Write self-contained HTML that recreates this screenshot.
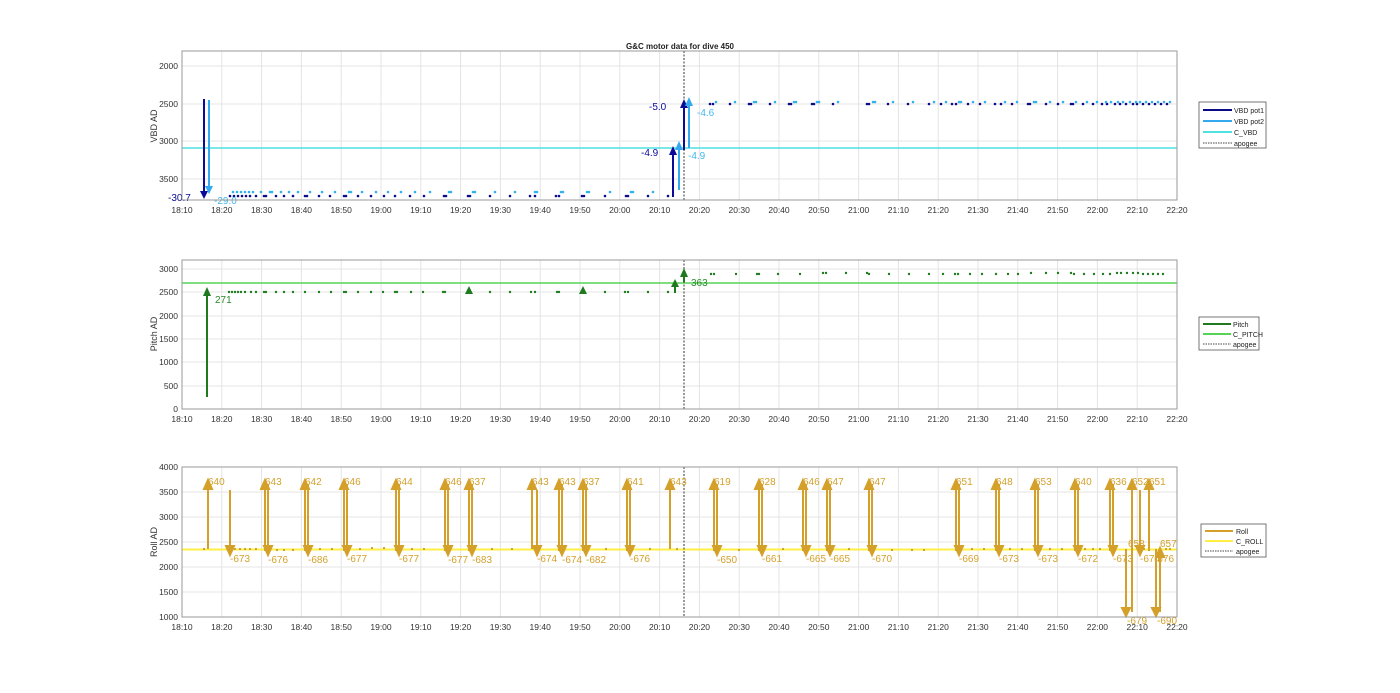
<!DOCTYPE html>
<html><head><meta charset="utf-8"><style>
html,body{margin:0;padding:0;background:#fff;width:1400px;height:693px;overflow:hidden}
svg{display:block;font-family:"Liberation Sans",Arial,sans-serif}
.tk{font-size:8.5px;fill:#333}
.g{stroke:#e4e4e4;stroke-width:1}
.ax{fill:none;stroke:#9a9a9a;stroke-width:1}
</style></head><body>
<svg width="1400" height="693" viewBox="0 0 1400 693">
<defs>
<marker id="mN" markerWidth="10" markerHeight="10" refX="5" refY="9" orient="auto" markerUnits="userSpaceOnUse"><path d="M0,9 L5,0 L10,9z" fill="#0b0b99" transform="rotate(0)"/></marker>
</defs>

<!-- ============ PLOT 1 ============ -->
<g>
<rect x="182" y="51" width="995" height="149" fill="#fff"/>
<g class="g">
<line x1="221.8" y1="51" x2="221.8" y2="200"/><line x1="261.6" y1="51" x2="261.6" y2="200"/><line x1="301.4" y1="51" x2="301.4" y2="200"/><line x1="341.2" y1="51" x2="341.2" y2="200"/><line x1="381" y1="51" x2="381" y2="200"/><line x1="420.8" y1="51" x2="420.8" y2="200"/><line x1="460.6" y1="51" x2="460.6" y2="200"/><line x1="500.4" y1="51" x2="500.4" y2="200"/><line x1="540.2" y1="51" x2="540.2" y2="200"/><line x1="580" y1="51" x2="580" y2="200"/><line x1="619.8" y1="51" x2="619.8" y2="200"/><line x1="659.6" y1="51" x2="659.6" y2="200"/><line x1="699.4" y1="51" x2="699.4" y2="200"/><line x1="739.2" y1="51" x2="739.2" y2="200"/><line x1="779" y1="51" x2="779" y2="200"/><line x1="818.8" y1="51" x2="818.8" y2="200"/><line x1="858.6" y1="51" x2="858.6" y2="200"/><line x1="898.4" y1="51" x2="898.4" y2="200"/><line x1="938.2" y1="51" x2="938.2" y2="200"/><line x1="978" y1="51" x2="978" y2="200"/><line x1="1017.8" y1="51" x2="1017.8" y2="200"/><line x1="1057.6" y1="51" x2="1057.6" y2="200"/><line x1="1097.4" y1="51" x2="1097.4" y2="200"/><line x1="1137.2" y1="51" x2="1137.2" y2="200"/>
<line x1="182" y1="66" x2="1177" y2="66"/><line x1="182" y1="104" x2="1177" y2="104"/><line x1="182" y1="141" x2="1177" y2="141"/><line x1="182" y1="179" x2="1177" y2="179"/>
</g>
<line x1="182" y1="148" x2="1177" y2="148" stroke="#4fe0e0" stroke-width="1.5"/>
<line x1="684" y1="51" x2="684" y2="200" stroke="#333" stroke-width="1" stroke-dasharray="2,1.5"/>
<g fill="#0b0b88">
<circle cx="230" cy="196" r="1.3"/><circle cx="234" cy="196" r="1.3"/><circle cx="238" cy="196" r="1.3"/><circle cx="242" cy="196" r="1.3"/><circle cx="246" cy="196" r="1.3"/><circle cx="250" cy="196" r="1.3"/><circle cx="256" cy="196" r="1.3"/><circle cx="264" cy="196" r="1.3"/><circle cx="266" cy="196" r="1.3"/><circle cx="276" cy="196" r="1.3"/><circle cx="284" cy="196" r="1.3"/><circle cx="293" cy="196" r="1.3"/><circle cx="305" cy="196" r="1.3"/><circle cx="307" cy="196" r="1.3"/><circle cx="319" cy="196" r="1.3"/><circle cx="330" cy="196" r="1.3"/><circle cx="344" cy="196" r="1.3"/><circle cx="346" cy="196" r="1.3"/><circle cx="358" cy="196" r="1.3"/><circle cx="371" cy="196" r="1.3"/><circle cx="384" cy="196" r="1.3"/><circle cx="395" cy="196" r="1.3"/><circle cx="410" cy="196" r="1.3"/><circle cx="424" cy="196" r="1.3"/><circle cx="444" cy="196" r="1.3"/><circle cx="446" cy="196" r="1.3"/><circle cx="468" cy="196" r="1.3"/><circle cx="470" cy="196" r="1.3"/><circle cx="490" cy="196" r="1.3"/><circle cx="510" cy="196" r="1.3"/><circle cx="530" cy="196" r="1.3"/><circle cx="535" cy="196" r="1.3"/><circle cx="556" cy="196" r="1.3"/><circle cx="559" cy="196" r="1.3"/><circle cx="582" cy="196" r="1.3"/><circle cx="584" cy="196" r="1.3"/><circle cx="605" cy="196" r="1.3"/><circle cx="626" cy="196" r="1.3"/><circle cx="628" cy="196" r="1.3"/><circle cx="648" cy="196" r="1.3"/><circle cx="668" cy="196" r="1.3"/>
<circle cx="710" cy="104" r="1.3"/><circle cx="713" cy="104" r="1.3"/><circle cx="730" cy="104" r="1.3"/><circle cx="749" cy="104" r="1.3"/><circle cx="751" cy="104" r="1.3"/><circle cx="770" cy="104" r="1.3"/><circle cx="789" cy="104" r="1.3"/><circle cx="791" cy="104" r="1.3"/><circle cx="812" cy="104" r="1.3"/><circle cx="814" cy="104" r="1.3"/><circle cx="833" cy="104" r="1.3"/><circle cx="867" cy="104" r="1.3"/><circle cx="869" cy="104" r="1.3"/><circle cx="888" cy="104" r="1.3"/><circle cx="908" cy="104" r="1.3"/><circle cx="929" cy="104" r="1.3"/><circle cx="941" cy="104" r="1.3"/><circle cx="952" cy="104" r="1.3"/><circle cx="956" cy="104" r="1.3"/><circle cx="968" cy="104" r="1.3"/><circle cx="980" cy="104" r="1.3"/><circle cx="995" cy="104" r="1.3"/><circle cx="1001" cy="104" r="1.3"/><circle cx="1012" cy="104" r="1.3"/><circle cx="1028" cy="104" r="1.3"/><circle cx="1030" cy="104" r="1.3"/><circle cx="1046" cy="104" r="1.3"/><circle cx="1058" cy="104" r="1.3"/><circle cx="1071" cy="104" r="1.3"/><circle cx="1073" cy="104" r="1.3"/><circle cx="1083" cy="104" r="1.3"/><circle cx="1093" cy="104" r="1.3"/><circle cx="1102" cy="104" r="1.3"/><circle cx="1107" cy="104" r="1.3"/><circle cx="1115" cy="104" r="1.3"/><circle cx="1120" cy="104" r="1.3"/><circle cx="1126" cy="104" r="1.3"/><circle cx="1133" cy="104" r="1.3"/><circle cx="1137" cy="104" r="1.3"/><circle cx="1143" cy="104" r="1.3"/><circle cx="1149" cy="104" r="1.3"/><circle cx="1155" cy="104" r="1.3"/><circle cx="1161" cy="104" r="1.3"/><circle cx="1167" cy="104" r="1.3"/>
</g>
<g fill="#33b0f0">
<circle cx="233" cy="192" r="1.3"/><circle cx="237" cy="192" r="1.3"/><circle cx="241" cy="192" r="1.3"/><circle cx="245" cy="192" r="1.3"/><circle cx="249" cy="192" r="1.3"/><circle cx="253" cy="192" r="1.3"/><circle cx="261" cy="192" r="1.3"/><circle cx="270" cy="192" r="1.3"/><circle cx="272" cy="192" r="1.3"/><circle cx="281" cy="192" r="1.3"/><circle cx="289" cy="192" r="1.3"/><circle cx="298" cy="192" r="1.3"/><circle cx="310" cy="192" r="1.3"/><circle cx="322" cy="192" r="1.3"/><circle cx="335" cy="192" r="1.3"/><circle cx="349" cy="192" r="1.3"/><circle cx="351" cy="192" r="1.3"/><circle cx="362" cy="192" r="1.3"/><circle cx="376" cy="192" r="1.3"/><circle cx="388" cy="192" r="1.3"/><circle cx="401" cy="192" r="1.3"/><circle cx="415" cy="192" r="1.3"/><circle cx="430" cy="192" r="1.3"/><circle cx="449" cy="192" r="1.3"/><circle cx="451" cy="192" r="1.3"/><circle cx="473" cy="192" r="1.3"/><circle cx="475" cy="192" r="1.3"/><circle cx="495" cy="192" r="1.3"/><circle cx="515" cy="192" r="1.3"/><circle cx="535" cy="192" r="1.3"/><circle cx="537" cy="192" r="1.3"/><circle cx="561" cy="192" r="1.3"/><circle cx="563" cy="192" r="1.3"/><circle cx="587" cy="192" r="1.3"/><circle cx="589" cy="192" r="1.3"/><circle cx="610" cy="192" r="1.3"/><circle cx="631" cy="192" r="1.3"/><circle cx="633" cy="192" r="1.3"/><circle cx="653" cy="192" r="1.3"/>
<circle cx="716" cy="102" r="1.3"/><circle cx="735" cy="102" r="1.3"/><circle cx="754" cy="102" r="1.3"/><circle cx="756" cy="102" r="1.3"/><circle cx="775" cy="102" r="1.3"/><circle cx="794" cy="102" r="1.3"/><circle cx="796" cy="102" r="1.3"/><circle cx="817" cy="102" r="1.3"/><circle cx="819" cy="102" r="1.3"/><circle cx="838" cy="102" r="1.3"/><circle cx="873" cy="102" r="1.3"/><circle cx="875" cy="102" r="1.3"/><circle cx="893" cy="102" r="1.3"/><circle cx="913" cy="102" r="1.3"/><circle cx="934" cy="102" r="1.3"/><circle cx="946" cy="102" r="1.3"/><circle cx="959" cy="102" r="1.3"/><circle cx="961" cy="102" r="1.3"/><circle cx="973" cy="102" r="1.3"/><circle cx="985" cy="102" r="1.3"/><circle cx="1005" cy="102" r="1.3"/><circle cx="1017" cy="102" r="1.3"/><circle cx="1034" cy="102" r="1.3"/><circle cx="1036" cy="102" r="1.3"/><circle cx="1050" cy="102" r="1.3"/><circle cx="1063" cy="102" r="1.3"/><circle cx="1076" cy="102" r="1.3"/><circle cx="1087" cy="102" r="1.3"/><circle cx="1097" cy="102" r="1.3"/><circle cx="1106" cy="102" r="1.3"/><circle cx="1111" cy="102" r="1.3"/><circle cx="1118" cy="102" r="1.3"/><circle cx="1123" cy="102" r="1.3"/><circle cx="1130" cy="102" r="1.3"/><circle cx="1136" cy="102" r="1.3"/><circle cx="1140" cy="102" r="1.3"/><circle cx="1146" cy="102" r="1.3"/><circle cx="1152" cy="102" r="1.3"/><circle cx="1158" cy="102" r="1.3"/><circle cx="1164" cy="102" r="1.3"/><circle cx="1170" cy="102" r="1.3"/>
</g>
<!-- arrows -->
<g stroke="#0b0b99" stroke-width="2" fill="#0b0b99">
<line x1="204" y1="99" x2="204" y2="192"/><path d="M200,191 L208,191 L204,199z" stroke="none"/>
<line x1="673" y1="197" x2="673" y2="154"/><path d="M669,155 L677,155 L673,146z" stroke="none"/>
<line x1="684" y1="150" x2="684" y2="107"/><path d="M680,108 L688,108 L684,99z" stroke="none"/>
</g>
<g stroke="#33aaee" stroke-width="2" fill="#33aaee">
<line x1="209" y1="100" x2="209" y2="187"/><path d="M205,186 L213,186 L209,194z" stroke="none"/>
<line x1="679" y1="190" x2="679" y2="149"/><path d="M675,150 L683,150 L679,141z" stroke="none"/>
<line x1="689" y1="148" x2="689" y2="105"/><path d="M685,106 L693,106 L689,97z" stroke="none"/>
</g>
<g font-size="10">
<text x="168" y="201" fill="#0b0b99">-30.7</text>
<text x="214" y="204" fill="#44b8ee">-29.0</text>
<text x="641" y="156" fill="#0b0b99">-4.9</text>
<text x="688" y="159" fill="#44b8ee">-4.9</text>
<text x="649" y="110" fill="#0b0b99">-5.0</text>
<text x="697" y="116" fill="#44b8ee">-4.6</text>
</g>
<rect x="182" y="51" width="995" height="149" class="ax"/>
<g class="tk" text-anchor="end"><text x="178" y="69">2000</text><text x="178" y="107">2500</text><text x="178" y="144">3000</text><text x="178" y="182">3500</text></g>
<text transform="translate(157,126) rotate(-90)" font-size="9" fill="#333" text-anchor="middle">VBD AD</text>
<text x="680" y="49" font-size="8" font-weight="bold" fill="#222" text-anchor="middle">G&amp;C motor data for dive 450</text>
<g class="tk" text-anchor="middle"><text x="182" y="213">18:10</text><text x="221.8" y="213">18:20</text><text x="261.6" y="213">18:30</text><text x="301.4" y="213">18:40</text><text x="341.2" y="213">18:50</text><text x="381" y="213">19:00</text><text x="420.8" y="213">19:10</text><text x="460.6" y="213">19:20</text><text x="500.4" y="213">19:30</text><text x="540.2" y="213">19:40</text><text x="580" y="213">19:50</text><text x="619.8" y="213">20:00</text><text x="659.6" y="213">20:10</text><text x="699.4" y="213">20:20</text><text x="739.2" y="213">20:30</text><text x="779" y="213">20:40</text><text x="818.8" y="213">20:50</text><text x="858.6" y="213">21:00</text><text x="898.4" y="213">21:10</text><text x="938.2" y="213">21:20</text><text x="978" y="213">21:30</text><text x="1017.8" y="213">21:40</text><text x="1057.6" y="213">21:50</text><text x="1097.4" y="213">22:00</text><text x="1137.2" y="213">22:10</text><text x="1177" y="213">22:20</text></g>
<!-- legend -->
<rect x="1199" y="102" width="67" height="46" fill="#fff" stroke="#555" stroke-width="0.8"/>
<line x1="1203" y1="110" x2="1232" y2="110" stroke="#0b0b88" stroke-width="2"/>
<line x1="1203" y1="121" x2="1232" y2="121" stroke="#33aaee" stroke-width="2"/>
<line x1="1203" y1="132" x2="1232" y2="132" stroke="#4fe0e0" stroke-width="2"/>
<line x1="1203" y1="143" x2="1232" y2="143" stroke="#444" stroke-width="1" stroke-dasharray="1.5,1"/>
<g font-size="7" fill="#222"><text x="1234" y="113">VBD pot1</text><text x="1234" y="124">VBD pot2</text><text x="1234" y="135">C_VBD</text><text x="1234" y="146">apogee</text></g>
</g>

<!-- ============ PLOT 2 ============ -->
<g>
<g class="g">
<line x1="221.8" y1="260" x2="221.8" y2="409"/><line x1="261.6" y1="260" x2="261.6" y2="409"/><line x1="301.4" y1="260" x2="301.4" y2="409"/><line x1="341.2" y1="260" x2="341.2" y2="409"/><line x1="381" y1="260" x2="381" y2="409"/><line x1="420.8" y1="260" x2="420.8" y2="409"/><line x1="460.6" y1="260" x2="460.6" y2="409"/><line x1="500.4" y1="260" x2="500.4" y2="409"/><line x1="540.2" y1="260" x2="540.2" y2="409"/><line x1="580" y1="260" x2="580" y2="409"/><line x1="619.8" y1="260" x2="619.8" y2="409"/><line x1="659.6" y1="260" x2="659.6" y2="409"/><line x1="699.4" y1="260" x2="699.4" y2="409"/><line x1="739.2" y1="260" x2="739.2" y2="409"/><line x1="779" y1="260" x2="779" y2="409"/><line x1="818.8" y1="260" x2="818.8" y2="409"/><line x1="858.6" y1="260" x2="858.6" y2="409"/><line x1="898.4" y1="260" x2="898.4" y2="409"/><line x1="938.2" y1="260" x2="938.2" y2="409"/><line x1="978" y1="260" x2="978" y2="409"/><line x1="1017.8" y1="260" x2="1017.8" y2="409"/><line x1="1057.6" y1="260" x2="1057.6" y2="409"/><line x1="1097.4" y1="260" x2="1097.4" y2="409"/><line x1="1137.2" y1="260" x2="1137.2" y2="409"/>
<line x1="182" y1="269" x2="1177" y2="269"/><line x1="182" y1="292" x2="1177" y2="292"/><line x1="182" y1="316" x2="1177" y2="316"/><line x1="182" y1="339" x2="1177" y2="339"/><line x1="182" y1="362" x2="1177" y2="362"/><line x1="182" y1="386" x2="1177" y2="386"/>
</g>
<line x1="182" y1="283" x2="1177" y2="283" stroke="#55d455" stroke-width="1.5"/>
<line x1="684" y1="260" x2="684" y2="409" stroke="#333" stroke-width="1" stroke-dasharray="2,1.5"/>
<g fill="#1f7a1f">
<circle cx="229" cy="292" r="1.2"/><circle cx="232" cy="292" r="1.2"/><circle cx="235" cy="292" r="1.2"/><circle cx="238" cy="292" r="1.2"/><circle cx="241" cy="292" r="1.2"/><circle cx="245" cy="292" r="1.2"/><circle cx="251" cy="292" r="1.2"/><circle cx="256" cy="292" r="1.2"/><circle cx="264" cy="292" r="1.2"/><circle cx="266" cy="292" r="1.2"/><circle cx="276" cy="292" r="1.2"/><circle cx="284" cy="292" r="1.2"/><circle cx="293" cy="292" r="1.2"/><circle cx="305" cy="292" r="1.2"/><circle cx="319" cy="292" r="1.2"/><circle cx="331" cy="292" r="1.2"/><circle cx="344" cy="292" r="1.2"/><circle cx="346" cy="292" r="1.2"/><circle cx="358" cy="292" r="1.2"/><circle cx="371" cy="292" r="1.2"/><circle cx="383" cy="292" r="1.2"/><circle cx="395" cy="292" r="1.2"/><circle cx="397" cy="292" r="1.2"/><circle cx="411" cy="292" r="1.2"/><circle cx="423" cy="292" r="1.2"/><circle cx="443" cy="292" r="1.2"/><circle cx="445" cy="292" r="1.2"/><circle cx="490" cy="292" r="1.2"/><circle cx="510" cy="292" r="1.2"/><circle cx="531" cy="292" r="1.2"/><circle cx="535" cy="292" r="1.2"/><circle cx="557" cy="292" r="1.2"/><circle cx="559" cy="292" r="1.2"/><circle cx="605" cy="292" r="1.2"/><circle cx="625" cy="292" r="1.2"/><circle cx="628" cy="292" r="1.2"/><circle cx="648" cy="292" r="1.2"/><circle cx="668" cy="292" r="1.2"/>
<circle cx="711" cy="274" r="1.2"/><circle cx="714" cy="274" r="1.2"/><circle cx="736" cy="274" r="1.2"/><circle cx="757" cy="274" r="1.2"/><circle cx="759" cy="274" r="1.2"/><circle cx="778" cy="274" r="1.2"/><circle cx="800" cy="274" r="1.2"/><circle cx="823" cy="273" r="1.2"/><circle cx="826" cy="273" r="1.2"/><circle cx="846" cy="273" r="1.2"/><circle cx="867" cy="273" r="1.2"/><circle cx="869" cy="274" r="1.2"/><circle cx="889" cy="274" r="1.2"/><circle cx="909" cy="274" r="1.2"/><circle cx="929" cy="274" r="1.2"/><circle cx="943" cy="274" r="1.2"/><circle cx="955" cy="274" r="1.2"/><circle cx="958" cy="274" r="1.2"/><circle cx="970" cy="274" r="1.2"/><circle cx="982" cy="274" r="1.2"/><circle cx="996" cy="274" r="1.2"/><circle cx="1008" cy="274" r="1.2"/><circle cx="1018" cy="274" r="1.2"/><circle cx="1031" cy="273" r="1.2"/><circle cx="1046" cy="273" r="1.2"/><circle cx="1058" cy="273" r="1.2"/><circle cx="1071" cy="273" r="1.2"/><circle cx="1074" cy="274" r="1.2"/><circle cx="1084" cy="274" r="1.2"/><circle cx="1094" cy="274" r="1.2"/><circle cx="1103" cy="274" r="1.2"/><circle cx="1110" cy="274" r="1.2"/><circle cx="1117" cy="273" r="1.2"/><circle cx="1121" cy="273" r="1.2"/><circle cx="1127" cy="273" r="1.2"/><circle cx="1133" cy="273" r="1.2"/><circle cx="1138" cy="273" r="1.2"/><circle cx="1143" cy="274" r="1.2"/><circle cx="1148" cy="274" r="1.2"/><circle cx="1153" cy="274" r="1.2"/><circle cx="1158" cy="274" r="1.2"/><circle cx="1163" cy="274" r="1.2"/>
</g>
<g stroke="#1f7a1f" stroke-width="2" fill="#1f7a1f">
<line x1="207" y1="397" x2="207" y2="295"/><path d="M203,296 L211,296 L207,287z" stroke="none"/>
<line x1="675" y1="293" x2="675" y2="286"/><path d="M671,287 L679,287 L675,279z" stroke="none"/>
<line x1="684" y1="282" x2="684" y2="276"/><path d="M680,277 L688,277 L684,268z" stroke="none"/>
<path d="M465,294 L473,294 L469,286z" stroke="none"/><path d="M579,294 L587,294 L583,286z" stroke="none"/>
</g>
<g font-size="10"><text x="215" y="303" fill="#2a8a2a">271</text><text x="691" y="286" fill="#2a8a2a">363</text></g>
<rect x="182" y="260" width="995" height="149" class="ax"/>
<g class="tk" text-anchor="end"><text x="178" y="272">3000</text><text x="178" y="295">2500</text><text x="178" y="319">2000</text><text x="178" y="342">1500</text><text x="178" y="365">1000</text><text x="178" y="389">500</text><text x="178" y="412">0</text></g>
<text transform="translate(157,334) rotate(-90)" font-size="9" fill="#333" text-anchor="middle">Pitch AD</text>
<g class="tk" text-anchor="middle"><text x="182" y="422">18:10</text><text x="221.8" y="422">18:20</text><text x="261.6" y="422">18:30</text><text x="301.4" y="422">18:40</text><text x="341.2" y="422">18:50</text><text x="381" y="422">19:00</text><text x="420.8" y="422">19:10</text><text x="460.6" y="422">19:20</text><text x="500.4" y="422">19:30</text><text x="540.2" y="422">19:40</text><text x="580" y="422">19:50</text><text x="619.8" y="422">20:00</text><text x="659.6" y="422">20:10</text><text x="699.4" y="422">20:20</text><text x="739.2" y="422">20:30</text><text x="779" y="422">20:40</text><text x="818.8" y="422">20:50</text><text x="858.6" y="422">21:00</text><text x="898.4" y="422">21:10</text><text x="938.2" y="422">21:20</text><text x="978" y="422">21:30</text><text x="1017.8" y="422">21:40</text><text x="1057.6" y="422">21:50</text><text x="1097.4" y="422">22:00</text><text x="1137.2" y="422">22:10</text><text x="1177" y="422">22:20</text></g>
<rect x="1199" y="317" width="60" height="33" fill="#fff" stroke="#555" stroke-width="0.8"/>
<line x1="1203" y1="324" x2="1231" y2="324" stroke="#1f7a1f" stroke-width="2"/>
<line x1="1203" y1="334" x2="1231" y2="334" stroke="#55d455" stroke-width="2"/>
<line x1="1203" y1="344" x2="1231" y2="344" stroke="#444" stroke-width="1" stroke-dasharray="1.5,1"/>
<g font-size="7" fill="#222"><text x="1233" y="327">Pitch</text><text x="1233" y="337">C_PITCH</text><text x="1233" y="347">apogee</text></g>
</g>

<!-- ============ PLOT 3 ============ -->
<g>
<g class="g">
<line x1="221.8" y1="467" x2="221.8" y2="617"/><line x1="261.6" y1="467" x2="261.6" y2="617"/><line x1="301.4" y1="467" x2="301.4" y2="617"/><line x1="341.2" y1="467" x2="341.2" y2="617"/><line x1="381" y1="467" x2="381" y2="617"/><line x1="420.8" y1="467" x2="420.8" y2="617"/><line x1="460.6" y1="467" x2="460.6" y2="617"/><line x1="500.4" y1="467" x2="500.4" y2="617"/><line x1="540.2" y1="467" x2="540.2" y2="617"/><line x1="580" y1="467" x2="580" y2="617"/><line x1="619.8" y1="467" x2="619.8" y2="617"/><line x1="659.6" y1="467" x2="659.6" y2="617"/><line x1="699.4" y1="467" x2="699.4" y2="617"/><line x1="739.2" y1="467" x2="739.2" y2="617"/><line x1="779" y1="467" x2="779" y2="617"/><line x1="818.8" y1="467" x2="818.8" y2="617"/><line x1="858.6" y1="467" x2="858.6" y2="617"/><line x1="898.4" y1="467" x2="898.4" y2="617"/><line x1="938.2" y1="467" x2="938.2" y2="617"/><line x1="978" y1="467" x2="978" y2="617"/><line x1="1017.8" y1="467" x2="1017.8" y2="617"/><line x1="1057.6" y1="467" x2="1057.6" y2="617"/><line x1="1097.4" y1="467" x2="1097.4" y2="617"/><line x1="1137.2" y1="467" x2="1137.2" y2="617"/>
<line x1="182" y1="492" x2="1177" y2="492"/><line x1="182" y1="517" x2="1177" y2="517"/><line x1="182" y1="542" x2="1177" y2="542"/><line x1="182" y1="567" x2="1177" y2="567"/><line x1="182" y1="592" x2="1177" y2="592"/>
</g>
<line x1="182" y1="549.5" x2="1177" y2="549.5" stroke="#ffee44" stroke-width="2"/>
<line x1="684" y1="467" x2="684" y2="617" stroke="#333" stroke-width="1" stroke-dasharray="2,1.5"/>
<g fill="#c99a2e">
<circle cx="204" cy="549" r="1.1"/><circle cx="235" cy="549" r="1.1"/><circle cx="240" cy="549" r="1.1"/><circle cx="245" cy="549" r="1.1"/><circle cx="250" cy="549" r="1.1"/><circle cx="256" cy="549" r="1.1"/><circle cx="277" cy="550" r="1.1"/><circle cx="284" cy="550" r="1.1"/><circle cx="293" cy="550" r="1.1"/><circle cx="320" cy="549" r="1.1"/><circle cx="332" cy="549" r="1.1"/><circle cx="360" cy="549" r="1.1"/><circle cx="372" cy="548" r="1.1"/><circle cx="384" cy="548" r="1.1"/><circle cx="412" cy="549" r="1.1"/><circle cx="424" cy="549" r="1.1"/><circle cx="492" cy="549" r="1.1"/><circle cx="512" cy="549" r="1.1"/><circle cx="606" cy="549" r="1.1"/><circle cx="650" cy="549" r="1.1"/><circle cx="677" cy="549" r="1.1"/><circle cx="739" cy="550" r="1.1"/><circle cx="783" cy="549" r="1.1"/><circle cx="849" cy="549" r="1.1"/><circle cx="892" cy="550" r="1.1"/><circle cx="912" cy="550" r="1.1"/><circle cx="924" cy="550" r="1.1"/><circle cx="972" cy="549" r="1.1"/><circle cx="984" cy="549" r="1.1"/><circle cx="1010" cy="549" r="1.1"/><circle cx="1022" cy="549" r="1.1"/><circle cx="1050" cy="549" r="1.1"/><circle cx="1062" cy="549" r="1.1"/><circle cx="1085" cy="549" r="1.1"/><circle cx="1093" cy="549" r="1.1"/><circle cx="1100" cy="549" r="1.1"/><circle cx="1144" cy="549" r="1.1"/><circle cx="1166" cy="549" r="1.1"/><circle cx="1170" cy="549" r="1.1"/>
</g>
<g stroke="#d4a02a" stroke-width="2" fill="#d4a02a">
<!-- pairs: up at x (to 484), down at x+2 (to 551) -->
<path d="M208,549 V488 M204,489 L212,489 L208,480z"/>
<path d="M230,490 V547 M226,546 L234,546 L230,555z"/>
<path d="M265,551 V488 M261,489 L269,489 L265,480z M268,484 V547 M264,546 L272,546 L268,555z"/>
<path d="M305,551 V488 M301,489 L309,489 L305,480z M308,484 V547 M304,546 L312,546 L308,555z"/>
<path d="M344,551 V488 M340,489 L348,489 L344,480z M347,484 V547 M343,546 L351,546 L347,555z"/>
<path d="M396,551 V488 M392,489 L400,489 L396,480z M399,484 V547 M395,546 L403,546 L399,555z"/>
<path d="M445,551 V488 M441,489 L449,489 L445,480z M448,484 V547 M444,546 L452,546 L448,555z"/>
<path d="M469,551 V488 M465,489 L473,489 L469,480z M472,484 V547 M468,546 L476,546 L472,555z"/>
<path d="M532,549 V488 M528,489 L536,489 L532,480z M537,490 V547 M533,546 L541,546 L537,555z"/>
<path d="M559,551 V488 M555,489 L563,489 L559,480z M562,484 V547 M558,546 L566,546 L562,555z"/>
<path d="M583,551 V488 M579,489 L587,489 L583,480z M586,484 V547 M582,546 L590,546 L586,555z"/>
<path d="M627,551 V488 M623,489 L631,489 L627,480z M630,484 V547 M626,546 L634,546 L630,555z"/>
<path d="M670,549 V488 M666,489 L674,489 L670,480z"/>
<path d="M714,551 V488 M710,489 L718,489 L714,480z M717,484 V547 M713,546 L721,546 L717,555z"/>
<path d="M759,551 V488 M755,489 L763,489 L759,480z M762,484 V547 M758,546 L766,546 L762,555z"/>
<path d="M803,551 V488 M799,489 L807,489 L803,480z M806,484 V547 M802,546 L810,546 L806,555z"/>
<path d="M827,551 V488 M823,489 L831,489 L827,480z M830,484 V547 M826,546 L834,546 L830,555z"/>
<path d="M869,551 V488 M865,489 L873,489 L869,480z M872,484 V547 M868,546 L876,546 L872,555z"/>
<path d="M956,551 V488 M952,489 L960,489 L956,480z M959,484 V547 M955,546 L963,546 L959,555z"/>
<path d="M996,551 V488 M992,489 L1000,489 L996,480z M999,484 V547 M995,546 L1003,546 L999,555z"/>
<path d="M1035,551 V488 M1031,489 L1039,489 L1035,480z M1038,484 V547 M1034,546 L1042,546 L1038,555z"/>
<path d="M1075,551 V488 M1071,489 L1079,489 L1075,480z M1078,484 V547 M1074,546 L1082,546 L1078,555z"/>
<path d="M1110,551 V488 M1106,489 L1114,489 L1110,480z M1113,484 V547 M1109,546 L1117,546 L1113,555z"/>
<path d="M1126,549 V609 M1122,608 L1130,608 L1126,616z"/>
<path d="M1132,612 V488 M1128,489 L1136,489 L1132,480z"/>
<path d="M1140,490 V547 M1136,546 L1144,546 L1140,555z"/>
<path d="M1149,551 V488 M1145,489 L1153,489 L1149,480z"/>
<path d="M1156,549 V609 M1152,608 L1160,608 L1156,616z"/>
<path d="M1160,612 V556 M1156,557 L1164,557 L1160,548z"/>
</g>
<g font-size="10" fill="#d4a02a">
<text x="208" y="485">640</text><text x="265" y="485">643</text><text x="305" y="485">642</text><text x="344" y="485">646</text><text x="396" y="485">644</text><text x="445" y="485">646</text><text x="469" y="485">637</text><text x="532" y="485">643</text><text x="559" y="485">643</text><text x="583" y="485">637</text><text x="627" y="485">641</text><text x="670" y="485">643</text><text x="714" y="485">619</text><text x="759" y="485">628</text><text x="803" y="485">646</text><text x="827" y="485">647</text><text x="869" y="485">647</text><text x="956" y="485">651</text><text x="996" y="485">648</text><text x="1035" y="485">653</text><text x="1075" y="485">640</text><text x="1110" y="485">636</text><text x="1132" y="485">652</text><text x="1149" y="485">651</text><text x="1128" y="547">658</text><text x="1160" y="547">657</text>
<text x="230" y="562">-673</text><text x="268" y="563">-676</text><text x="308" y="563">-686</text><text x="347" y="562">-677</text><text x="399" y="562">-677</text><text x="448" y="563">-677</text><text x="472" y="563">-683</text><text x="537" y="562">-674</text><text x="562" y="563">-674</text><text x="586" y="563">-682</text><text x="630" y="562">-676</text><text x="717" y="563">-650</text><text x="762" y="562">-661</text><text x="806" y="562">-665</text><text x="830" y="562">-665</text><text x="872" y="562">-670</text><text x="959" y="562">-669</text><text x="999" y="562">-673</text><text x="1038" y="562">-673</text><text x="1078" y="562">-672</text><text x="1113" y="562">-673</text><text x="1140" y="562">-674</text><text x="1154" y="562">-676</text><text x="1127" y="624">-679</text><text x="1157" y="624">-690</text>
</g>
<rect x="182" y="467" width="995" height="150" class="ax"/>
<g class="tk" text-anchor="end"><text x="178" y="470">4000</text><text x="178" y="495">3500</text><text x="178" y="520">3000</text><text x="178" y="545">2500</text><text x="178" y="570">2000</text><text x="178" y="595">1500</text><text x="178" y="620">1000</text></g>
<text transform="translate(157,542) rotate(-90)" font-size="9" fill="#333" text-anchor="middle">Roll AD</text>
<g class="tk" text-anchor="middle"><text x="182" y="630">18:10</text><text x="221.8" y="630">18:20</text><text x="261.6" y="630">18:30</text><text x="301.4" y="630">18:40</text><text x="341.2" y="630">18:50</text><text x="381" y="630">19:00</text><text x="420.8" y="630">19:10</text><text x="460.6" y="630">19:20</text><text x="500.4" y="630">19:30</text><text x="540.2" y="630">19:40</text><text x="580" y="630">19:50</text><text x="619.8" y="630">20:00</text><text x="659.6" y="630">20:10</text><text x="699.4" y="630">20:20</text><text x="739.2" y="630">20:30</text><text x="779" y="630">20:40</text><text x="818.8" y="630">20:50</text><text x="858.6" y="630">21:00</text><text x="898.4" y="630">21:10</text><text x="938.2" y="630">21:20</text><text x="978" y="630">21:30</text><text x="1017.8" y="630">21:40</text><text x="1057.6" y="630">21:50</text><text x="1097.4" y="630">22:00</text><text x="1137.2" y="630">22:10</text><text x="1177" y="630">22:20</text></g>
<rect x="1201" y="524" width="65" height="33" fill="#fff" stroke="#555" stroke-width="0.8"/>
<line x1="1205" y1="531" x2="1233" y2="531" stroke="#d4a02a" stroke-width="2"/>
<line x1="1205" y1="541" x2="1233" y2="541" stroke="#ffee44" stroke-width="2"/>
<line x1="1205" y1="551" x2="1233" y2="551" stroke="#444" stroke-width="1" stroke-dasharray="1.5,1"/>
<g font-size="7" fill="#222"><text x="1236" y="534">Roll</text><text x="1236" y="544">C_ROLL</text><text x="1236" y="554">apogee</text></g>
</g>
</svg>
</body></html>
